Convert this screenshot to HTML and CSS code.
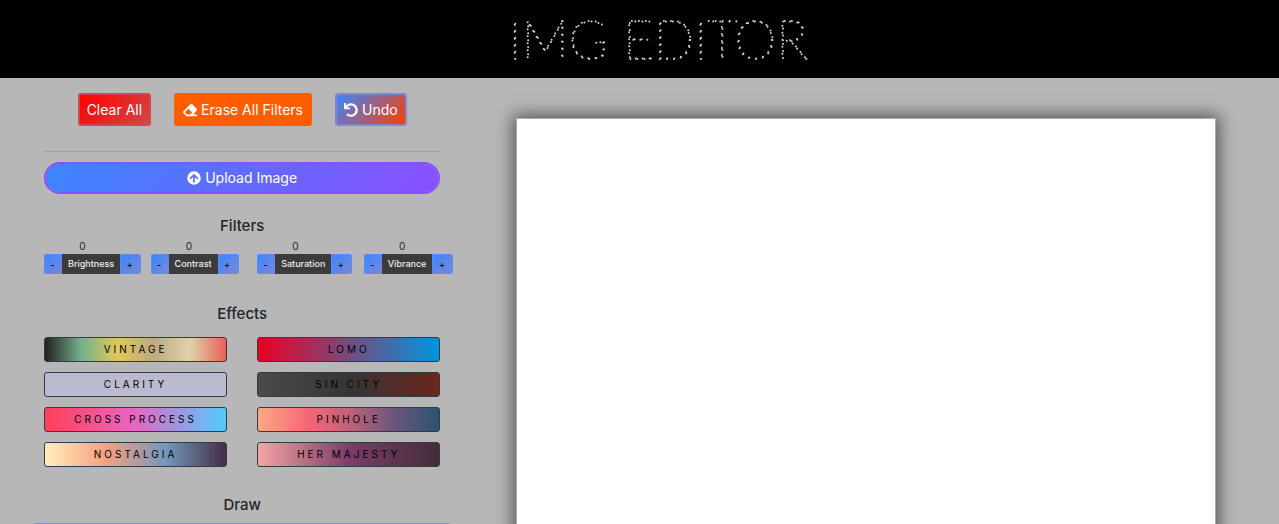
FILE: index.html
```html
<!DOCTYPE html>
<html lang="en">
<head>
<meta charset="utf-8">
<meta name="viewport" content="width=device-width, initial-scale=1">
<title>IMG EDITOR</title>
<link rel="stylesheet" href="styles.css">
</head>
<body>
<header class="banner">
  <h1 class="banner-title">
    <svg class="banner-art" width="320" height="60"><text class="dotted" x="160" y="50" text-anchor="middle">IMG EDITOR</text></svg>
  </h1>
</header>
<main class="workspace">
  <section class="controls">
    <div class="actions">
      <button class="btn btn-clear" type="button">Clear All</button>
      <button class="btn btn-erase" type="button">
        <svg class="icon" viewBox="0 0 512 512"><path fill="currentColor" d="M498 274c19-19 19-49 0-68L338 46c-19-19-49-19-68 0L14 302c-19 19-19 49 0 68l96 96c9 9 21 14 34 14h356c7 0 12-5 12-12v-40c0-7-5-12-12-12H376zM195 211l138 138-67 67H150l-80-80z"/></svg>
        Erase All Filters
      </button>
      <button class="btn btn-undo" type="button">
        <svg class="icon" viewBox="0 0 512 512"><path fill="currentColor" d="M212 224H12c-7 0-12-5-12-12V12C0 5 5 0 12 0h48c7 0 12 5 12 12v78a247 247 0 0 1 184-82c137 0 248 111 248 248S393 504 256 504c-63 0-121-24-165-63-5-4-5-12 0-17l34-34c4-4 11-5 16-1a168 168 0 1 0-23-229h94c7 0 12 5 12 12v40c0 7-5 12-12 12z"/></svg>
        Undo
      </button>
    </div>
    <hr class="rule">
    <button class="btn-upload" type="button">
      <svg class="icon" viewBox="0 0 512 512"><path fill="currentColor" fill-rule="evenodd" d="M8 256a248 248 0 1 1 496 0 248 248 0 1 1-496 0zm143 39 72-75v181c0 13 11 24 24 24h18c13 0 24-11 24-24V220l72 75c9 10 25 10 34 1l11-12c9-9 9-24 0-33L273 119c-9-9-24-9-34 0L106 251c-9 9-9 24 0 33l11 12c9 9 25 9 34-1z"/></svg>
      Upload Image
    </button>

    <h2 class="heading">Filters</h2>
    <div class="filters">
      <div class="filter"><output class="count">0</output><div class="stepper" role="group" aria-label="Brightness"><button class="step step-down" type="button">-</button><span class="step-name">Brightness</span><button class="step" type="button">+</button></div></div>
      <div class="filter"><output class="count">0</output><div class="stepper" role="group" aria-label="Contrast"><button class="step step-down" type="button">-</button><span class="step-name">Contrast</span><button class="step" type="button">+</button></div></div>
      <div class="filter"><output class="count">0</output><div class="stepper" role="group" aria-label="Saturation"><button class="step step-down" type="button">-</button><span class="step-name">Saturation</span><button class="step" type="button">+</button></div></div>
      <div class="filter"><output class="count">0</output><div class="stepper" role="group" aria-label="Vibrance"><button class="step step-down" type="button">-</button><span class="step-name">Vibrance</span><button class="step" type="button">+</button></div></div>
    </div>

    <h2 class="heading">Effects</h2>
    <div class="effects">
      <button class="effect vintage" type="button">VINTAGE</button>
      <button class="effect lomo" type="button">LOMO</button>
      <button class="effect clarity" type="button">CLARITY</button>
      <button class="effect sin-city" type="button">SIN CITY</button>
      <button class="effect cross-process" type="button">CROSS PROCESS</button>
      <button class="effect pinhole" type="button">PINHOLE</button>
      <button class="effect nostalgia" type="button">NOSTALGIA</button>
      <button class="effect her-majesty" type="button">HER MAJESTY</button>
    </div>

    <h2 class="heading">Draw</h2>
    <div class="draw-panel"></div>
  </section>
  <section class="stage">
    <canvas class="canvas" aria-label="Image canvas"></canvas>
  </section>
</main>
</body>
</html>
```
FILE: styles.css
```css
* { box-sizing: border-box; }

body {
  margin: 0;
  height: 100vh;
  display: flex;
  flex-direction: column;
  overflow: hidden;
  background: #b7b7b7;
  color: #212529;
  font-family: Inter, "Liberation Sans", sans-serif;
}

button { font-family: inherit; cursor: pointer; }

.banner {
  flex: none;
  display: flex;
  justify-content: center;
  padding: 9px 0;
  background: #000;
}
.banner-title { margin: 0 0 0 36px; height: 60px; }
.banner-art { display: block; }
.dotted {
  font-family: Lato, sans-serif;
  font-size: 53px;
  font-weight: 100;
  fill: none;
  stroke: #ccc;
  stroke-width: 2;
  stroke-linecap: round;
  stroke-dasharray: 0 7;
}

.workspace { flex: 1; display: flex; min-height: 0; overflow: hidden; }

.controls {
  flex: 0 0 calc(100% / 3);
  margin-left: 29px;
  padding: 15px 15px 0;
}

.actions { display: flex; justify-content: center; gap: 23px; }
.btn {
  display: flex;
  align-items: center;
  gap: 4px;
  height: 33px;
  padding: 0 7px;
  border: 2px solid;
  border-radius: 3px;
  color: #fff;
  font-size: 14px;
  font-weight: 400;
  white-space: nowrap;
}
.icon { width: 14px; height: 14px; flex: none; }
.btn-clear { border-color: #d04848; background: linear-gradient(135deg, #f00, #d04848); }
.btn-erase { border-color: #ff5e00; background: #ff5e00; }
.btn-undo { border-color: #7a88d8; background: linear-gradient(135deg, #3a86ff, #ff3c00) padding-box; }

.rule { margin: 25px 0 10px; border: 0; border-top: 1px solid #a0a0a0; }

.btn-upload {
  display: flex;
  align-items: center;
  justify-content: center;
  gap: 4px;
  width: 100%;
  height: 32px;
  padding: 0 0 1px;
  border: 2px solid #8a4fff;
  border-radius: 16px;
  background: linear-gradient(135deg, #3a86ff, #8a4fff) padding-box;
  color: #fff;
  font-size: 14px;
  font-weight: 400;
}

.heading {
  margin: 23px 0 4px;
  font-size: 15px;
  line-height: 18px;
  font-weight: 500;
  text-align: center;
}

.filters {
  display: grid;
  grid-template-columns: repeat(4, 1fr);
  margin: 0 -15px 31px;
}
.filter { min-width: 0; padding: 0 15px; }
.count { display: block; height: 14px; font-size: 10px; line-height: 14px; text-align: center; margin-bottom: 1px; }
.stepper { display: flex; width: max-content; height: 20px; }
.step {
  width: 21px;
  padding: 0 2px 0 0;
  border: 1px solid #5b8cf5;
  border-radius: 0 2px 2px 0;
  background: linear-gradient(135deg, #3a86ff, #7a88d8);
  color: #000;
  font-size: 9px;
  font-weight: 500;
}
.step-down { width: 18px; border-radius: 2px 0 0 2px; border-right: 0; }
.step-name {
  padding: 0 6px;
  background: #3b3b3b;
  color: #eee;
  font-size: 9px;
  line-height: 20px;
  font-weight: 500;
}

.effects {
  display: grid;
  grid-template-columns: 1fr 1fr;
  gap: 10px 30px;
  margin-top: 14px;
}
.effect {
  height: 25px;
  padding: 0 0 1px;
  border: 1px solid #343a40;
  border-radius: 3px;
  color: #000;
  font-size: 10px;
  letter-spacing: 3px;
}
.vintage { background: linear-gradient(90deg, #212121, #76b18f 20%, #e0c85c 40%, #bda982 60%, #dfd2a9 80%, #e8605a); }
.lomo { background: linear-gradient(90deg, #eb0022, #0096dd); }
.clarity { background: #babad1; }
.sin-city { background: linear-gradient(90deg, #4b4b4b, #353535 50%, #6b271d); }
.cross-process { background: linear-gradient(90deg, #ff4057, #e667c4 50%, #50ccff); }
.pinhole { background: linear-gradient(90deg, #fbaa82, #f66778 27%, #c16279 50%, #6c567b 75%, #2d5273); }
.nostalgia { background: linear-gradient(90deg, #ffefba, #f7a080 33%, #7297bd 67%, #442d44); }
.her-majesty { background: linear-gradient(90deg, #f4a5a2, #7c3d69 50%, #432d38); }

.effects + .heading { margin: 29px 0 9px; }

.draw-panel {
  height: 100px;
  margin: 0 -12px;
  border: 1px solid #8585cc;
  border-radius: 4px;
}

.stage { flex: 1; min-width: 0; padding: 40px 63px 0 61px; }
.canvas {
  display: block;
  width: 100%;
  height: 500px;
  border: 1px solid #aaa;
  background: #fff;
  box-shadow: 0 0 16px 3px #555;
}
```
